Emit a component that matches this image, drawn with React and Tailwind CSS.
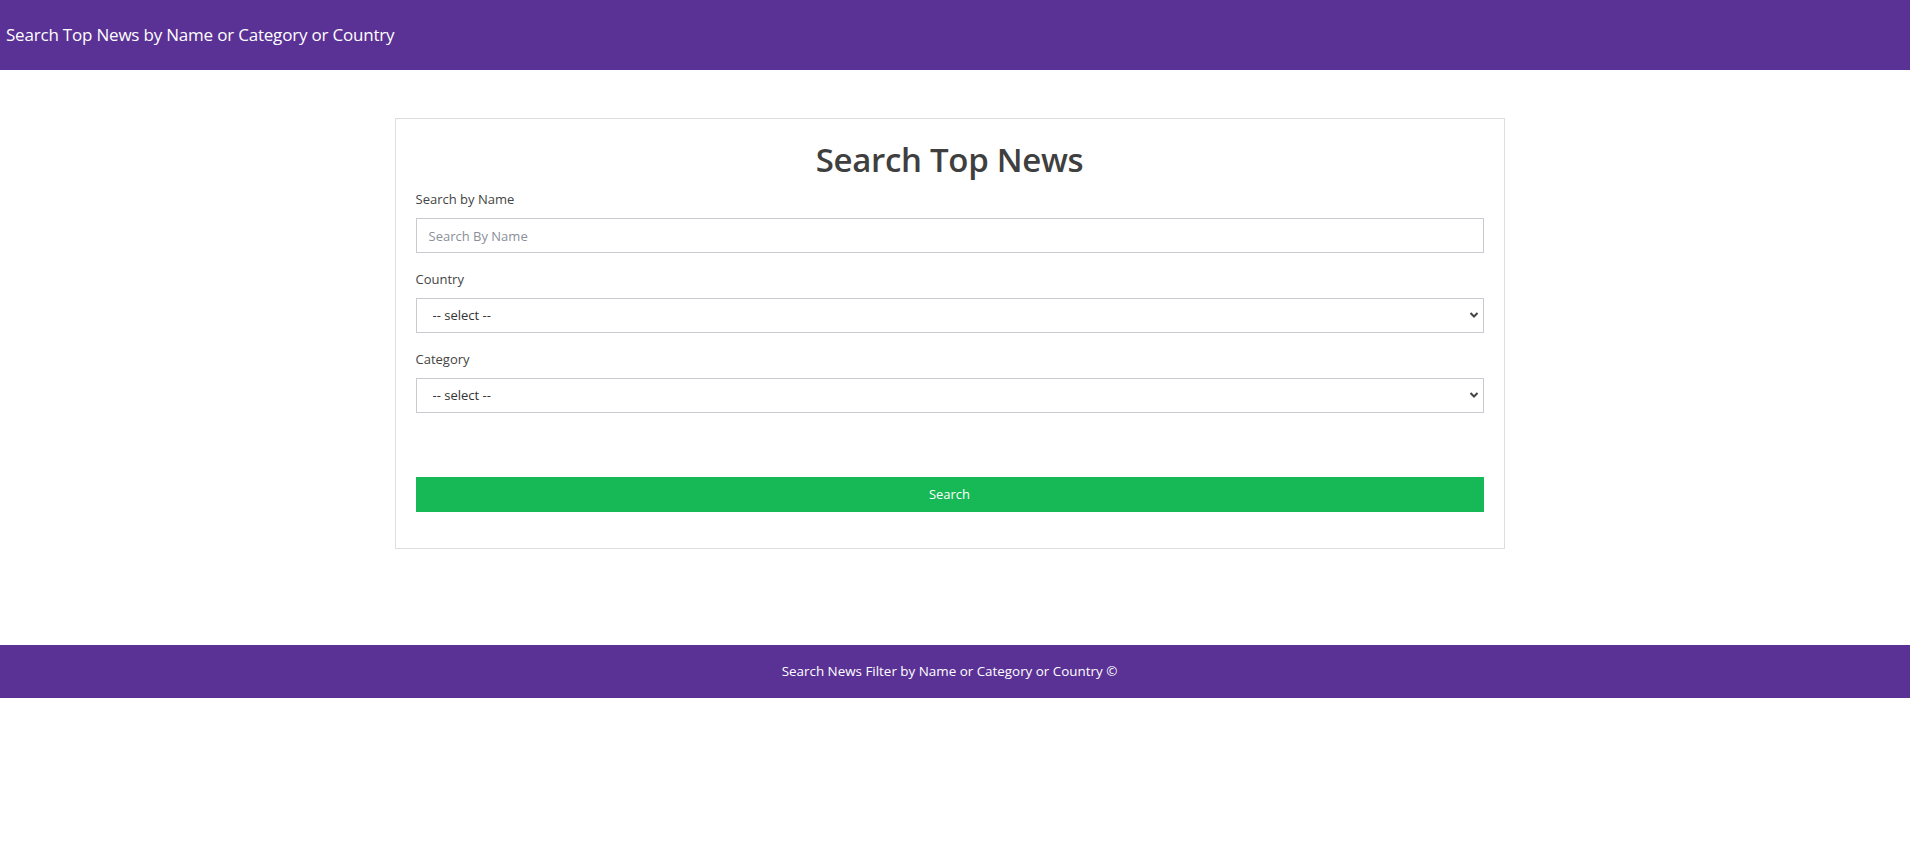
import React, { useState } from "react";

function SelectField({ label, value, onChange, options }) {
  return (
    <div className="mb-4">
      <label className="block text-[13px] leading-[21px] mb-2 text-[#444]">{label}</label>
      <div className="relative">
        <select
          value={value}
          onChange={(e) => onChange(e.target.value)}
          className="appearance-none w-full h-[35px] border border-[#c9c9d0] bg-white pl-[16px] pr-8 text-[13px] text-[#333] outline-none"
        >
          <option value="">-- select --</option>
          {options.map((o) => (
            <option key={o} value={o}>
              {o}
            </option>
          ))}
        </select>
        <svg
          className="pointer-events-none absolute right-[5px] top-[13px]"
          width="10"
          height="8"
          viewBox="0 0 10 8"
        >
          <path d="M1.5 2 L5 5.5 L8.5 2" fill="none" stroke="#444" strokeWidth="2" />
        </svg>
      </div>
    </div>
  );
}

function App() {
  const [name, setName] = useState("");
  const [country, setCountry] = useState("");
  const [category, setCategory] = useState("");

  return (
    <div className="min-h-screen bg-white font-['Open_Sans',sans-serif]">
      {/* header */}
      <header className="h-[70px] bg-[#5a3195] flex items-center pl-[6px]">
        <span className="text-white text-[17px] tracking-[-0.2px]">
          Search Top News by Name or Category or Country
        </span>
      </header>

      {/* main */}
      <main className="pt-[48px] pb-[96px] flex justify-center pr-[11px]">
        <div className="w-[1110px] border border-[#dedede] px-[20px] pt-[19px] pb-[36px]">
          <h1 className="text-center text-[33px] font-semibold text-[#3f3f3f] leading-[44px] mb-[7px] tracking-[-0.3px]">
            Search Top News
          </h1>

          <div className="mb-4">
            <label className="block text-[13px] leading-[21px] mb-2 text-[#444]">Search by Name</label>
            <input
              value={name}
              onChange={(e) => setName(e.target.value)}
              placeholder="Search By Name"
              className="w-full h-[35px] border border-[#c9c9d0] px-[12px] text-[13px] text-[#333] placeholder:text-[#8a8f99] outline-none"
            />
          </div>

          <SelectField
            label="Country"
            value={country}
            onChange={setCountry}
            options={["India", "United States", "United Kingdom", "Australia"]}
          />
          <SelectField
            label="Category"
            value={category}
            onChange={setCategory}
            options={["Business", "Entertainment", "Health", "Science", "Sports", "Technology"]}
          />

          <div className="pt-[48px]">
            <button className="w-full h-[35px] bg-[#16b955] text-white text-[13px]">Search</button>
          </div>
        </div>
      </main>

      {/* footer */}
      <footer className="h-[53px] bg-[#5a3195] flex items-center justify-center pr-[11px]">
        <p className="text-white text-[13.4px]">Search News Filter by Name or Category or Country ©</p>
      </footer>
    </div>
  );
}

export default App;
